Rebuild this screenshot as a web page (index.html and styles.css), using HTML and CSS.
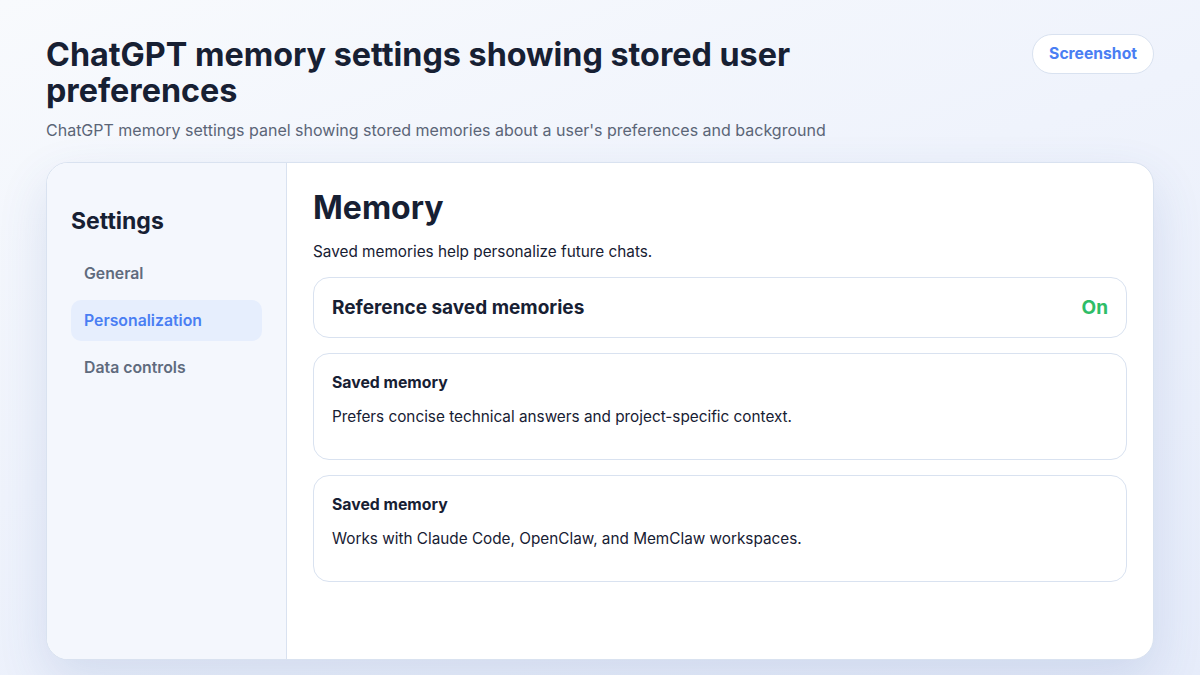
FILE: index.html
```html
<!DOCTYPE html>
<html lang="en">
<head>
  <meta charset="UTF-8">
  <meta name="viewport" content="width=device-width, initial-scale=1.0">
  <title>ChatGPT memory settings</title>
  <link rel="stylesheet" href="styles.css">
</head>
<body>
  <div class="page">
    <div class="header">
      <div class="header-text">
        <h1>ChatGPT memory settings showing stored user preferences</h1>
        <p class="caption">ChatGPT memory settings panel showing stored memories about a user's preferences and background</p>
      </div>
      <span class="badge">Screenshot</span>
    </div>

    <div class="window">
      <aside class="sidebar">
        <h2>Settings</h2>
        <nav class="nav">
          <a href="#" class="nav-item">General</a>
          <a href="#" class="nav-item active">Personalization</a>
          <a href="#" class="nav-item">Data controls</a>
        </nav>
      </aside>

      <main class="content">
        <h3>Memory</h3>
        <p class="lead">Saved memories help personalize future chats.</p>

        <div class="toggle-row">
          <span class="toggle-label">Reference saved memories</span>
          <span class="toggle-state">On</span>
        </div>

        <div class="memory">
          <div class="memory-title">Saved memory</div>
          <p class="memory-text">Prefers concise technical answers and project-specific context.</p>
        </div>

        <div class="memory">
          <div class="memory-title">Saved memory</div>
          <p class="memory-text">Works with Claude Code, OpenClaw, and MemClaw workspaces.</p>
        </div>
      </main>
    </div>
  </div>
</body>
</html>
```

FILE: styles.css
```css
* {
  box-sizing: border-box;
}

html, body {
  height: 100%;
}

body {
  margin: 0;
  font-family: Inter, "Noto Sans", sans-serif;
  color: #172033;
  background: linear-gradient(160deg, #f8fafd 0%, #eff3fc 45%, #e6ecfa 100%);
  overflow: hidden;
}

.page {
  padding: 34px 46px 0;
}

.header {
  display: flex;
  justify-content: space-between;
  align-items: flex-start;
}

.header-text {
  max-width: 820px;
  padding-top: 3px;
}

h1 {
  margin: 0;
  font-size: 32.3px;
  line-height: 36px;
  font-weight: 700;
  color: #172033;
}

.caption {
  margin: 10px 0 0;
  font-size: 16px;
  line-height: 22px;
  color: #5b6577;
}

.badge {
  display: inline-block;
  padding: 9px 16px;
  border: 1px solid #d9e2f0;
  border-radius: 999px;
  background: #fff;
  color: #4a7ef3;
  font-size: 15.7px;
  font-weight: 700;
  line-height: 20px;
}

/* settings window */
.window {
  display: flex;
  margin-top: 21px;
  height: 498px;
  border: 1px solid #d9e2f0;
  border-radius: 22px;
  background: #fff;
  overflow: hidden;
  box-shadow: 0 20px 50px rgba(60, 90, 160, 0.14);
}

.sidebar {
  width: 240px;
  flex-shrink: 0;
  padding: 44px 24px;
  background: #f4f7fd;
  border-right: 1px solid #d9e2f0;
}

.sidebar h2 {
  margin: 0 0 18px;
  font-size: 23px;
  line-height: 28px;
  font-weight: 700;
  color: #172033;
}

.nav {
  display: flex;
  flex-direction: column;
  gap: 6px;
}

.nav-item {
  display: block;
  padding: 10px 13px;
  border-radius: 10px;
  font-size: 15.8px;
  line-height: 21px;
  font-weight: 600;
  color: #5f6b7d;
  text-decoration: none;
}

.nav-item.active {
  background: #e6eefd;
  color: #4a7ef3;
}

.content {
  flex: 1;
  padding: 24px 26px;
}

.content h3 {
  margin: 0;
  font-size: 32px;
  line-height: 42px;
  font-weight: 700;
  color: #172033;
}

.lead {
  margin: 13px 0 15px;
  font-size: 15.3px;
  line-height: 20px;
  color: #172033;
}

.toggle-row {
  display: flex;
  justify-content: space-between;
  align-items: center;
  height: 61px;
  padding: 0 18px;
  border: 1px solid #d9e2f0;
  border-radius: 16px;
}

.toggle-label {
  font-size: 19px;
  font-weight: 700;
  color: #172033;
}

.toggle-state {
  font-size: 19px;
  font-weight: 700;
  color: #2ebd67;
}

.memory {
  margin-top: 15px;
  height: 107px;
  padding: 19px 18px;
  border: 1px solid #d9e2f0;
  border-radius: 16px;
}

.memory-title {
  font-size: 15.8px;
  line-height: 20px;
  font-weight: 700;
  color: #172033;
}

.memory-text {
  margin: 14px 0 0;
  font-size: 15.3px;
  line-height: 20px;
  color: #172033;
}
```
